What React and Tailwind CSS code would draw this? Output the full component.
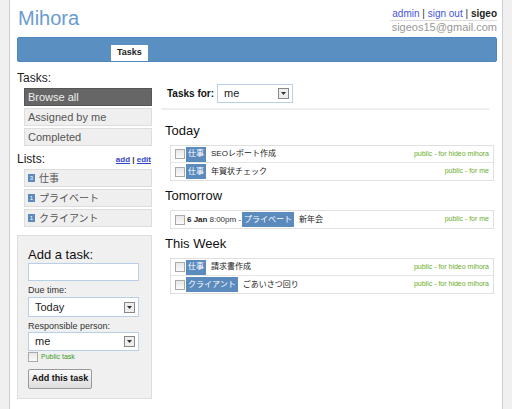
const SANS = "font-['Liberation_Sans','Noto_Sans_CJK_JP',sans-serif]"

const LISTS = [
  { count: 3, name: '仕事' },
  { count: 1, name: 'プライベート' },
  { count: 1, name: 'クライアント' },
]

const GROUPS = [
  {
    title: 'Today',
    tasks: [
      { tag: '仕事', text: 'SEOレポート作成', meta: 'public - for hideo mihora' },
      { tag: '仕事', text: '年賀状チェック', meta: 'public - for me' },
    ],
  },
  {
    title: 'Tomorrow',
    tasks: [
      { date: '6 Jan', time: '8:00pm - ', tag: 'プライベート', text: '新年会', meta: 'public - for me' },
    ],
  },
  {
    title: 'This Week',
    tasks: [
      { tag: '仕事', text: '請求書作成', meta: 'public - for hideo mihora' },
      { tag: 'クライアント', text: 'ごあいさつ回り', meta: 'public - for hideo mihora' },
    ],
  },
]

function Check() {
  return <span className="w-[10px] h-[10px] shrink-0 border border-[#aaa] bg-gradient-to-b from-[#e8e8e8] to-[#fafafa]" />
}

function SelectBox({ value, className = '' }) {
  return (
    <div className={`flex items-center justify-between border border-[#b8cfe6] bg-white pl-[6px] pr-[3px] ${className}`}>
      <span className="text-[11px] text-[#222]">{value}</span>
      <span className="w-[11px] h-[11px] border border-[#888] bg-[#eee] flex items-center justify-center">
        <svg width="5" height="3" viewBox="0 0 5 3"><path d="M0 0h5L2.5 3z" fill="#333" /></svg>
      </span>
    </div>
  )
}

function NavButton({ label, active }) {
  return (
    <div
      className={`h-[18px] flex items-center px-[3px] text-[11px] border ${
        active ? 'bg-[#666] border-[#555] text-[#eee]' : 'bg-[#efefef] border-[#ddd] text-[#555]'
      }`}
    >
      {label}
    </div>
  )
}

function TaskRow({ task, last }) {
  return (
    <div className={`h-[17px] flex items-center px-[4px] ${last ? '' : 'border-b border-[#e6e6e6]'}`}>
      <Check />
      {task.date && <span className="ml-[2px] text-[8px] font-bold text-[#222]">{task.date}</span>}
      {task.time && <span className="ml-[2px] text-[8px] text-[#333]">{task.time}</span>}
      <span className="ml-[1px] bg-[#5b8bbd] text-white text-[8px] px-[2px] h-[15px] flex items-center">{task.tag}</span>
      <span className="ml-[5px] text-[8px] text-[#222]">{task.text}</span>
      <span className="ml-auto text-[7px] text-[#6aad2a]">{task.meta}</span>
    </div>
  )
}

export default function App() {
  return (
    <div className={`${SANS} w-[512px] h-[409px] bg-[#f0f0f0] flex overflow-hidden`}>
      <div className="ml-[9px] w-[494px] h-full bg-white border-x border-[#ccc] flex flex-col pl-[7px] pr-[5px]">
        {/* header */}
        <div className="h-[37px] flex justify-between">
          <div className="text-[20px] text-[#6a9bd0] pt-[3px] pl-[1px]">Mihora</div>
          <div className="flex flex-col items-end pt-[8px]">
            <div className="text-[10px] border-b border-[#ddd] pl-[2px] leading-[12px]">
              <span className="text-[#4455dd]">admin</span>
              <span className="text-[#333]"> | </span>
              <span className="text-[#4455dd]">sign out</span>
              <span className="text-[#333]"> | </span>
              <span className="font-bold text-[#222]">sigeo</span>
            </div>
            <div className="text-[11px] text-[#999] leading-[13px]">sigeos15@gmail.com</div>
          </div>
        </div>

        <div className="h-[25px] bg-[#5a8fc2] rounded-[2px] border border-[#4f86bb] flex items-end pl-[93px]">
          <div className="bg-white h-[16px] px-[6px] text-[9px] font-bold text-[#222] flex items-center">Tasks</div>
        </div>

        <div className="flex mt-[7px]">
          {/* sidebar */}
          <div className="w-[135px] shrink-0">
            <div className="text-[12px] text-[#222] leading-[14px] mb-[3px] mt-[2px]">Tasks:</div>
            <div className="ml-[7px] flex flex-col gap-[2px]">
              <NavButton label="Browse all" active />
              <NavButton label="Assigned by me" />
              <NavButton label="Completed" />
            </div>
            <div className="flex items-end justify-between mt-[6px] mb-[3px] pr-[1px]">
              <span className="text-[12px] text-[#222] leading-[14px]">Lists:</span>
              <span className="text-[8px] font-bold text-[#3344cc]">
                <span className="underline">add</span>
                <span className="text-[#333]"> | </span>
                <span className="underline">edit</span>
              </span>
            </div>
            <div className="ml-[7px] flex flex-col gap-[2px]">
              {LISTS.map((l) => (
                <div key={l.name} className="h-[18px] flex items-center px-[3px] bg-[#efefef] border border-[#ddd]">
                  <span className="w-[7px] h-[8px] bg-[#5b8bbd] text-white text-[6px] flex items-center justify-center">{l.count}</span>
                  <span className="ml-[4px] text-[10px] text-[#555]">{l.name}</span>
                </div>
              ))}
            </div>

            <div className="mt-[8px] h-[164px] bg-[#f0f0f0] border border-[#ddd] pl-[10px] pt-[11px]">
              <div className="text-[13px] text-[#111] leading-[15px]">Add a task:</div>
              <div className="mt-[1px] w-[111px] h-[18px] bg-white border border-[#b8cfe6]" />
              <div className="mt-[4px] text-[9px] text-[#333] leading-[11px]">Due time:</div>
              <SelectBox value="Today" className="mt-[1px] w-[111px] h-[20px]" />
              <div className="mt-[4px] text-[9px] text-[#333] leading-[11px]">Responsible person:</div>
              <SelectBox value="me" className="w-[111px] h-[19px]" />
              <div className="mt-[1px] flex items-center gap-[3px]">
                <Check />
                <span className="text-[7px] text-[#3a9a2a]">Public task</span>
              </div>
              <button className="mt-[6px] h-[20px] w-[64px] bg-gradient-to-b from-[#fafafa] to-[#ddd] border border-[#999] rounded-[2px] text-[9px] font-bold text-[#111]">
                Add this task
              </button>
            </div>
          </div>

          {/* main */}
          <div className="flex-1 ml-[9px] pt-[15px]">
            <div className="flex items-center pl-[6px] pb-[5px] border-b-2 border-[#eee] mr-[8px]">
              <span className="text-[10px] font-bold text-[#111]">Tasks for:</span>
              <SelectBox value="me" className="ml-[3px] w-[76px] h-[19px]" />
            </div>
            {GROUPS.map((g, gi) => (
              <div key={g.title} className={gi === 0 ? 'mt-[13px]' : 'mt-[7px]'}>
                <div className="text-[13px] text-[#111] leading-[16px] pl-[4px]">{g.title}</div>
                <div className="mt-[6px] ml-[9px] mr-[3px] border border-[#e0e0e0]">
                  {g.tasks.map((t, i) => (
                    <TaskRow key={t.text} task={t} last={i === g.tasks.length - 1} />
                  ))}
                </div>
              </div>
            ))}
          </div>
        </div>
      </div>
    </div>
  )
}
